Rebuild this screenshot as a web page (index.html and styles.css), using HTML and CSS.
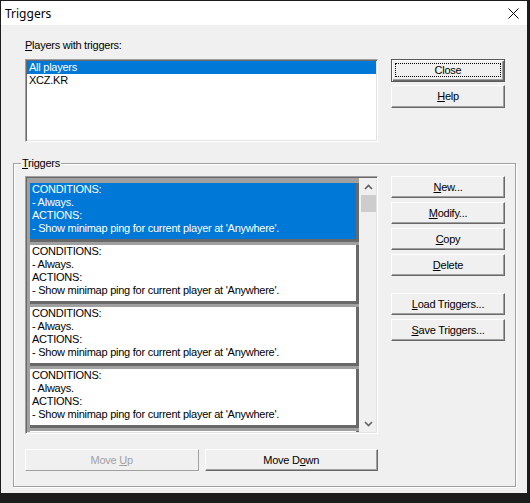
FILE: index.html
```html
<!DOCTYPE html>
<html>
<head>
<meta charset="utf-8">
<title>Triggers</title>
<link rel="stylesheet" href="styles.css">
</head>
<body>
<div class="window">
  <div class="titlebar">
    <span class="title">Triggers</span>
    <svg class="close-x" width="11" height="11" viewBox="0 0 11 11"><path d="M0.5 0.5 L10.5 10.5 M10.5 0.5 L0.5 10.5" stroke="#000" stroke-width="1" fill="none"/></svg>
  </div>
  <div class="content">
    <div class="top-row">
      <div class="players">
        <div class="label"><u>P</u>layers with triggers:</div>
        <div class="listbox">
          <div class="row sel">All players</div>
          <div class="row">XCZ.KR</div>
        </div>
      </div>
      <div class="side top-side">
        <button class="btn tall default"><span>Close</span></button>
        <button class="btn tall"><span><u>H</u>elp</span></button>
      </div>
    </div>
    <div class="group">
      <div class="group-label"><u>T</u>riggers</div>
      <div class="group-body">
        <div class="left-col">
          <div class="trig-list">
            <div class="items">
              <div class="item sel">
                <div>CONDITIONS:</div>
                <div>- Always.</div>
                <div>ACTIONS:</div>
                <div>- Show minimap ping for current player at 'Anywhere'.</div>
              </div>
              <div class="item">
                <div>CONDITIONS:</div>
                <div>- Always.</div>
                <div>ACTIONS:</div>
                <div>- Show minimap ping for current player at 'Anywhere'.</div>
              </div>
              <div class="item">
                <div>CONDITIONS:</div>
                <div>- Always.</div>
                <div>ACTIONS:</div>
                <div>- Show minimap ping for current player at 'Anywhere'.</div>
              </div>
              <div class="item">
                <div>CONDITIONS:</div>
                <div>- Always.</div>
                <div>ACTIONS:</div>
                <div>- Show minimap ping for current player at 'Anywhere'.</div>
              </div>
              <div class="item">
                <div>CONDITIONS:</div>
              </div>
            </div>
            <div class="scrollbar">
              <div class="sb-btn">
                <svg width="9" height="6" viewBox="0 0 9 6"><path d="M1 5 L4.5 1.5 L8 5" stroke="#606060" stroke-width="1.6" fill="none"/></svg>
              </div>
              <div class="sb-track"><div class="sb-thumb"></div></div>
              <div class="sb-btn">
                <svg width="9" height="6" viewBox="0 0 9 6"><path d="M1 1 L4.5 4.5 L8 1" stroke="#606060" stroke-width="1.6" fill="none"/></svg>
              </div>
            </div>
          </div>
          <div class="move-row">
            <button class="btn wide disabled"><span>Move <u>U</u>p</span></button>
            <button class="btn wide"><span>Move D<u>o</u>wn</span></button>
          </div>
        </div>
        <div class="side">
          <button class="btn"><span><u>N</u>ew...</span></button>
          <button class="btn"><span><u>M</u>odify...</span></button>
          <button class="btn"><span><u>C</u>opy</span></button>
          <button class="btn"><span><u>D</u>elete</span></button>
          <button class="btn sep"><span><u>L</u>oad Triggers...</span></button>
          <button class="btn"><span><u>S</u>ave Triggers...</span></button>
        </div>
      </div>
    </div>
  </div>
</div>
</body>
</html>
```

FILE: styles.css
```css
html, body {
  margin: 0;
  padding: 0;
}
body {
  background: #1c1c1c;
  width: 530px;
  height: 503px;
  overflow: hidden;
  font-family: "Liberation Sans", Arial, sans-serif;
  font-size: 11px;
  letter-spacing: -0.25px;
  color: #000;
}
.window {
  margin: 1px 0 0 1px;
  width: 526px;
  height: 492px;
  background: #f0f0f0;
  display: flex;
  flex-direction: column;
}
.titlebar {
  height: 24px;
  background: #fff;
  display: flex;
  align-items: center;
  justify-content: space-between;
  padding: 0 8px 0 4px;
}
.title {
  font-family: "Noto Sans", "Open Sans", sans-serif;
  font-size: 12px;
  letter-spacing: 0;
  color: #000;
}
.close-x {
  display: block;
}
.content {
  padding: 14px 0 0 24px;
}
.top-row {
  display: flex;
}
.players {
  width: 353px;
}
.label {
  height: 13px;
  line-height: 13px;
  margin-bottom: 7px;
}
.listbox {
  box-sizing: border-box;
  height: 83px;
  background: #fff;
  border: 1px solid;
  border-color: #a0a0a0 #fff #fff #a0a0a0;
  box-shadow: inset 1px 1px #696969, inset -1px -1px #e3e3e3;
  padding: 1px;
}
.row {
  height: 13px;
  line-height: 13px;
  padding-left: 2px;
  white-space: nowrap;
}
.row.sel {
  background: #0078d7;
  color: #fff;
}
.side {
  margin-left: 13px;
  width: 114px;
  display: flex;
  flex-direction: column;
  gap: 4px;
}
.top-side {
  padding-top: 20px;
  gap: 3px;
}
.btn {
  position: relative;
  box-sizing: border-box;
  width: 114px;
  height: 22px;
  padding: 0;
  margin: 0;
  background: #f0f0f0;
  border: 1px solid;
  border-color: #fff #696969 #696969 #fff;
  box-shadow: inset -1px -1px #a0a0a0;
  font-family: "Liberation Sans", Arial, sans-serif;
  font-size: 11px;
  letter-spacing: -0.25px;
  color: #000;
  display: flex;
  align-items: center;
  justify-content: center;
  line-height: 13px;
}
.btn span {
  white-space: pre;
}
.btn.tall {
  height: 23px;
}
.btn.default {
  border-color: #5a5a5a;
  box-shadow: inset 1px 1px #fff, inset -1px -1px #696969, inset -2px -2px #a0a0a0;
}
.btn.default::after {
  content: "";
  position: absolute;
  left: 3px;
  right: 3px;
  top: 3px;
  bottom: 4px;
  border: 1px dotted #000;
}
.btn.wide {
  width: 174px;
}
.btn.disabled {
  color: #a0a0a0;
  border-color: #fff #a0a0a0 #a0a0a0 #fff;
  box-shadow: none;
}
.btn.sep {
  margin-top: 13px;
}
.group {
  position: relative;
  box-sizing: border-box;
  margin: 21px 0 0 -12px;
  width: 503px;
  height: 324px;
  border: 1px solid #a0a0a0;
  box-shadow: inset 1px 1px #fff, 1px 1px #fff;
}
.group-label {
  position: absolute;
  top: -7px;
  left: 7px;
  padding: 0 1px;
  height: 13px;
  line-height: 13px;
  background: #f0f0f0;
}
.group-body {
  display: flex;
  padding: 12px 0 0 11px;
}
.left-col {
  width: 353px;
}
.trig-list {
  box-sizing: border-box;
  height: 258px;
  display: flex;
  border: 1px solid;
  border-color: #a0a0a0 #fff #fff #a0a0a0;
  box-shadow: inset 1px 1px #696969, inset -1px -1px #e3e3e3;
  padding: 1px;
}
.items {
  flex: 1;
  background: #a0a0a0;
  overflow: hidden;
  padding: 3px 0 0 3px;
}
.item {
  width: 326px;
  height: 56px;
  box-sizing: content-box;
  background: #fff;
  border-right: 3px solid #696969;
  border-bottom: 3px solid #696969;
  margin-bottom: 3px;
  padding: 0;
  white-space: nowrap;
}
.item div {
  height: 13px;
  line-height: 13px;
  padding-left: 2px;
}
.item div:first-child {
  margin-top: 2px;
}
.item.sel {
  background: #0078d7;
  color: #fff;
}
.scrollbar {
  width: 17px;
  background: #f0f0f0;
  display: flex;
  flex-direction: column;
}
.sb-btn {
  height: 17px;
  display: flex;
  align-items: center;
  justify-content: center;
  padding-left: 1px;
}
.sb-btn svg {
  display: block;
}
.sb-track {
  flex: 1;
  padding-left: 2px;
}
.sb-thumb {
  width: 15px;
  height: 17px;
  background: #cdcdcd;
}
.move-row {
  display: flex;
  gap: 6px;
  margin-top: 15px;
}
```
